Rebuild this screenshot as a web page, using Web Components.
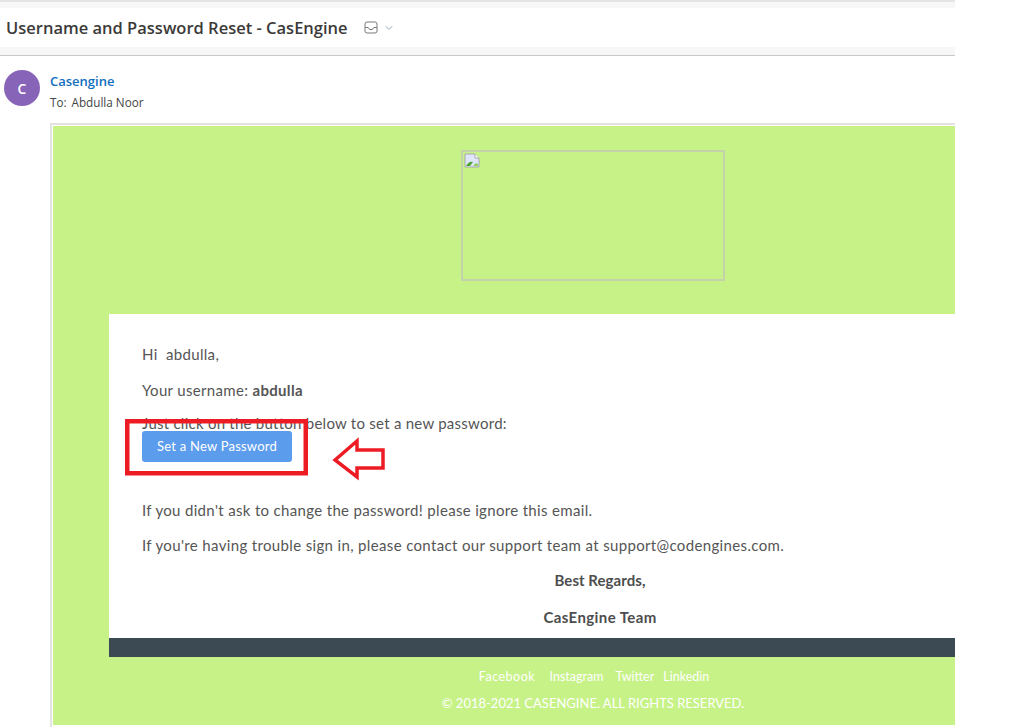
<!DOCTYPE html>
<html>
<head>
<meta charset="utf-8">
<title>Username and Password Reset - CasEngine</title>
<style>
    html,body{
        margin: 0;
        background: #fff;
    }
    body{
        width: 1026px;
        height: 727px;
        overflow: hidden;
    }
</style>
</head>
<body>
<mail-view>
    <subject-bar title-text="Username and Password Reset - CasEngine"></subject-bar>
    <sender-row name="Casengine" to="Abdulla Noor" initial="C"></sender-row>
    <mail-body>
        <mail-card>
            <p>Hi&nbsp; abdulla,</p>
            <p>Your username: <b>abdulla</b></p>
            <p class="tight">Just click on the button below to set a new password:</p>
            <reset-button>Set a New Password</reset-button>
            <p>If you didn't ask to change the password! please ignore this email.</p>
            <p class="trouble">If you're having trouble sign in, please contact our support team at support@codengines.com.</p>
            <p class="sign"><b>Best Regards,</b></p>
            <p class="sign team"><b>CasEngine Team</b></p>
        </mail-card>
    </mail-body>
</mail-view>

<script>
const FONT = `"Lato","Open Sans",sans-serif`

class MailView extends HTMLElement{
    constructor(){
        super()
        this.attachShadow({mode : 'open'})
        this.shadowRoot.innerHTML = `
            <style>
                :host{
                    display: block;
                    width: 955px;
                    height: 727px;
                    overflow: hidden;
                    background: #fff;
                }
            </style>
            <slot></slot>
        `
    }
}

class SubjectBar extends HTMLElement{
    constructor(){
        super()
        this.attachShadow({mode : 'open'})
    }
    connectedCallback(){
        this.shadowRoot.innerHTML = `
            <style>
                :host{
                    display: block;
                    background: #f7f7f7;
                    border-top: 2px solid #e4e4e4;
                    border-bottom: 1px solid #c8c8c8;
                    padding: 6px 0 8px;
                }
                .bar{
                    height: 39px;
                    background: #fff;
                    display: flex;
                    align-items: center;
                    padding-left: 6px;
                }
                h1{
                    margin: 0;
                    font: 600 16.5px "Open Sans",sans-serif;
                    color: #3b3a39;
                    white-space: nowrap;
                }
                svg{
                    display: block;
                }
                .inbox{
                    margin-left: 16px;
                }
                .chev{
                    margin-left: 7px;
                }
            </style>
            <div class="bar">
                <h1>${this.getAttribute('title-text')}</h1>
                <svg class="inbox" width="14" height="13" viewBox="0 0 14 13" fill="none" stroke="#7a7a7a" stroke-width="1">
                    <rect x="1" y="1" width="12" height="11" rx="2"/>
                    <path d="M1 6.5h3.2l1.3 2h3l1.3-2H13"/>
                </svg>
                <svg class="chev" width="8" height="6" viewBox="0 0 8 6" fill="none" stroke="#9aa7b4" stroke-width="1">
                    <path d="M.8 1.2 4 4.4l3.2-3.2"/>
                </svg>
            </div>
        `
    }
}

class SenderRow extends HTMLElement{
    constructor(){
        super()
        this.attachShadow({mode : 'open'})
    }
    connectedCallback(){
        this.shadowRoot.innerHTML = `
            <style>
                :host{
                    display: flex;
                    height: 67px;
                    padding: 14px 0 0 4px;
                    box-sizing: border-box;
                    font-family: "Open Sans",sans-serif;
                }
                .avatar{
                    width: 36px;
                    height: 36px;
                    border-radius: 50%;
                    background: #8764b8;
                    color: #fff;
                    font-size: 14px;
                    font-weight: 600;
                    display: flex;
                    align-items: center;
                    justify-content: center;
                    flex: none;
                }
                .who{
                    margin-left: 10px;
                    padding-top: 2px;
                }
                .name{
                    color: #106ebe;
                    font-size: 13px;
                    font-weight: 600;
                    line-height: 18px;
                }
                .to{
                    color: #444;
                    font-size: 11.7px;
                    line-height: 16px;
                    margin-top: 4px;
                }
                .to span{
                    margin-left: 5px;
                }
            </style>
            <div class="avatar">${this.getAttribute('initial')}</div>
            <div class="who">
                <div class="name">${this.getAttribute('name')}</div>
                <div class="to">To:<span>${this.getAttribute('to')}</span></div>
            </div>
        `
    }
}

class MailBody extends HTMLElement{
    constructor(){
        super()
        this.attachShadow({mode : 'open'})
        this.shadowRoot.innerHTML = `
            <style>
                :host{
                    display: block;
                    margin-left: 50px;
                    height: 604px;
                    border: solid #e2e2e2;
                    border-width: 2px 0 0 2px;
                    padding: 1px 0 0 1px;
                    box-sizing: border-box;
                    overflow: hidden;
                }
                .green{
                    width: 1080px;
                    height: 599px;
                    background: #c7f287;
                    padding-top: 24px;
                    box-sizing: border-box;
                }
                .logo{
                    width: 264px;
                    height: 131px;
                    margin: 0 auto 33px;
                    box-sizing: border-box;
                    border: 2px solid #c3d2ab;
                    padding: 1px;
                }
                .logo svg{
                    display: block;
                }
                .bar{
                    height: 19px;
                    width: 982px;
                    margin-left: 56px;
                    background: #3c4a54;
                }
                footer{
                    text-align: center;
                    color: #fff;
                    font-family: ${FONT};
                }
                .links{
                    margin-top: 12px;
                    padding-left: 2px;
                    font-size: 12.5px;
                    line-height: 16px;
                }
                .links span{
                    margin: 0 5px;
                }
                .links .fb{
                    letter-spacing: .5px;
                    margin-right: 3px;
                }
                .links .ig{
                    margin-right: 7px;
                }
                .links .tw{
                    margin-right: 4px;
                }
                .copy{
                    margin-top: 9px;
                    font-size: 13px;
                    line-height: 18px;
                }
                .mark{
                    position: absolute;
                    left: 125px;
                    top: 419px;
                }
            </style>
            <div class="green">
                <div class="logo">
                    <svg width="16" height="16" viewBox="0 0 16 16">
                        <path d="M1 1h10l4 4v9H1z" fill="#dfe6fb" stroke="#a8a8a8"/>
                        <path d="M2 13c2-4 5-5 7-4l-3 4z" fill="#4fa52f"/>
                        <path d="M9 13l3-3 2 1v2z" fill="#8fce5c"/>
                        <path d="M11 1v4h4" fill="#fff" stroke="#a8a8a8"/>
                    </svg>
                </div>
                <slot></slot>
                <div class="bar"></div>
                <footer>
                    <div class="links"><span class="fb">Facebook</span> &nbsp;<span class="ig">Instagram</span><span class="tw">Twitter</span><span>Linkedin</span></div>
                    <div class="copy">© 2018-2021 CASENGINE. ALL RIGHTS RESERVED.</div>
                </footer>
            </div>
            <svg class="mark" width="262" height="62" viewBox="0 0 262 62" fill="none" stroke="#ed1c24">
                <rect x="2.25" y="2.25" width="178.5" height="52" stroke-width="4.5"/>
                <path d="M210 41 232 22v9h26v18h-26v9z" stroke-width="3.5"/>
            </svg>
        `
    }
}

class MailCard extends HTMLElement{
    constructor(){
        super()
        this.attachShadow({mode : 'open'})
        this.shadowRoot.innerHTML = `
            <style>
                :host{
                    display: block;
                    width: 982px;
                    height: 324px;
                    margin-left: 56px;
                    padding: 22px 33px 0;
                    box-sizing: border-box;
                    background: #fff;
                    color: #555;
                    font: 15px/36px ${FONT};
                    letter-spacing: .33px;
                }
                ::slotted(p){
                    margin: 0;
                    line-height: 36px;
                }
                ::slotted(p.tight){
                    line-height: 16px;
                    padding-top: 7px;
                    letter-spacing: .25px;
                }
                ::slotted(p.trouble){
                    margin-top: -1px;
                    letter-spacing: .35px;
                }
                ::slotted(p.sign){
                    text-align: center;
                    letter-spacing: .05px;
                    color: #4d4d4d;
                    margin-top: -1px;
                }
                ::slotted(p.team){
                    letter-spacing: .4px;
                    margin-top: 1px;
                }
            </style>
            <slot></slot>
        `
    }
}

class ResetButton extends HTMLElement{
    constructor(){
        super()
        this.attachShadow({mode : 'open'})
        this.shadowRoot.innerHTML = `
            <style>
                :host{
                    display: block;
                    width: 150px;
                    height: 31px;
                    margin-bottom: 30px;
                    border-radius: 3px;
                    background: #5c9cec;
                    color: #fff;
                    font: 13px/31px ${FONT};
                    letter-spacing: .22px;
                    text-align: center;
                }
            </style>
            <slot></slot>
        `
    }
}

customElements.define('mail-view', MailView)
customElements.define('subject-bar', SubjectBar)
customElements.define('sender-row', SenderRow)
customElements.define('mail-body', MailBody)
customElements.define('mail-card', MailCard)
customElements.define('reset-button', ResetButton)
</script>
</body>
</html>
